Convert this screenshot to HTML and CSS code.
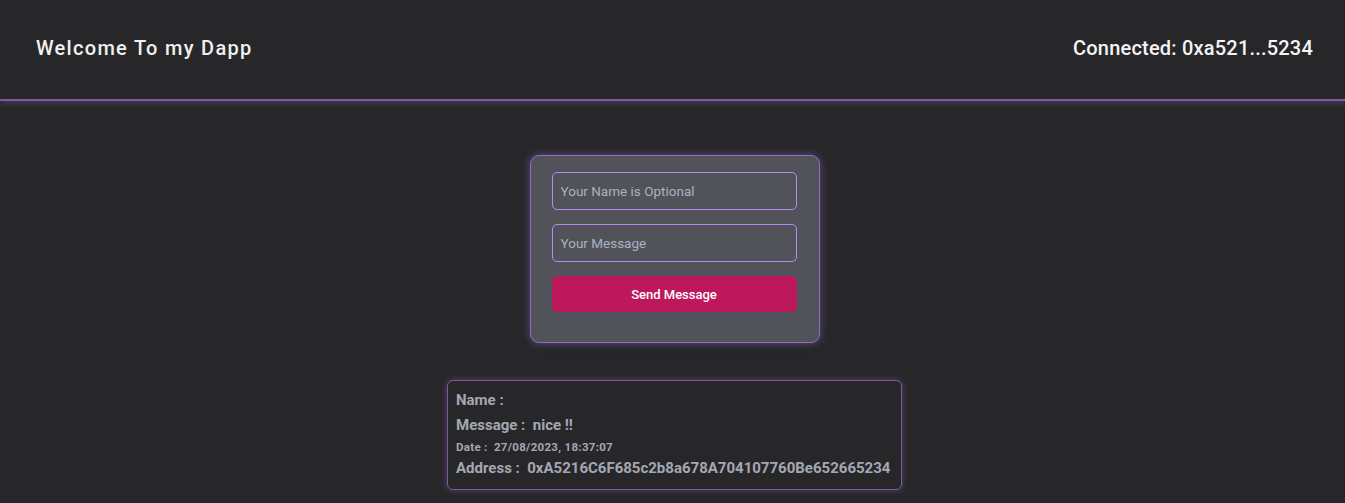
FILE: index.html
```html
<!DOCTYPE html>
<html lang="en">
<head>
<meta charset="utf-8">
<title>Dapp</title>
<link rel="stylesheet" href="styles.css">
</head>
<body>
<header class="topbar">
  <h1 class="brand">Welcome To my Dapp</h1>
  <div class="wallet">Connected: 0xa521...5234</div>
</header>
<main class="main">
  <form class="composer">
    <input class="field" type="text" placeholder="Your Name is Optional">
    <input class="field" type="text" placeholder="Your Message">
    <button class="send" type="button">Send Message</button>
  </form>
  <section class="msg">
    <div class="line">Name :</div>
    <div class="line">Message : &nbsp;nice !!</div>
    <div class="line small">Date : &nbsp;27/08/2023, 18:37:07</div>
    <div class="line">Address : &nbsp;0xA5216C6F685c2b8a678A704107760Be652665234</div>
  </section>
</main>
</body>
</html>
```
FILE: styles.css
```css
* { box-sizing: border-box; }
html, body { margin: 0; padding: 0; }
body {
  background: #27272a;
  font-family: "Roboto", "Liberation Sans", sans-serif;
  color: #f4f4f5;
  height: 503px;
  overflow: hidden;
}
.topbar {
  height: 101px;
  display: flex;
  align-items: center;
  justify-content: space-between;
  padding: 0 32px 4px 36px;
  border-bottom: 2px solid #7c5a9e;
  box-shadow: 0 3px 6px rgba(124, 90, 158, 0.35);
}
.brand {
  margin: 0;
  font-size: 20px;
  font-weight: 500;
  letter-spacing: 1.3px;
  color: #f0f0f0;
}
.wallet {
  font-size: 20px;
  font-weight: 500;
  letter-spacing: 0.2px;
  color: #f4f4f5;
}
.main {
  display: flex;
  flex-direction: column;
  align-items: center;
  padding-top: 54px;
  padding-left: 4px;
}
.composer {
  width: 290px;
  background: #52525b;
  border: 1px solid #8f6cc0;
  border-radius: 9px;
  box-shadow: 0 0 8px rgba(168, 120, 230, 0.45);
  padding: 16px 22px 30px 21px;
  display: flex;
  flex-direction: column;
  gap: 14px;
  margin: 0;
}
.field {
  height: 38px;
  width: 100%;
  background: #52525b;
  border: 1px solid #b68cf0;
  border-radius: 5px;
  padding: 0 8px;
  font-family: inherit;
  font-size: 13.5px;
  color: #e4e4e7;
  outline: none;
}
.field::placeholder { color: #a8b3c2; }
.send {
  height: 36px;
  width: 100%;
  background: #be185d;
  border: none;
  border-radius: 5px;
  color: #ffffff;
  font-family: inherit;
  font-size: 13px;
  font-weight: 500;
}
.msg {
  margin-top: 37px;
  width: 455px;
  border: 1px solid #7c5a9e;
  border-radius: 6px;
  box-shadow: 0 0 6px rgba(150, 100, 200, 0.45);
  padding: 8px 8px 10px 8px;
  color: #a4a8b2;
  font-weight: 700;
  font-size: 15px;
}
.line { line-height: 22px; margin-bottom: 3px; }
.line.small { font-size: 11.5px; letter-spacing: 0.3px; line-height: 16px; margin-bottom: 2px; }
.line:last-child { margin-bottom: 0; }
```
